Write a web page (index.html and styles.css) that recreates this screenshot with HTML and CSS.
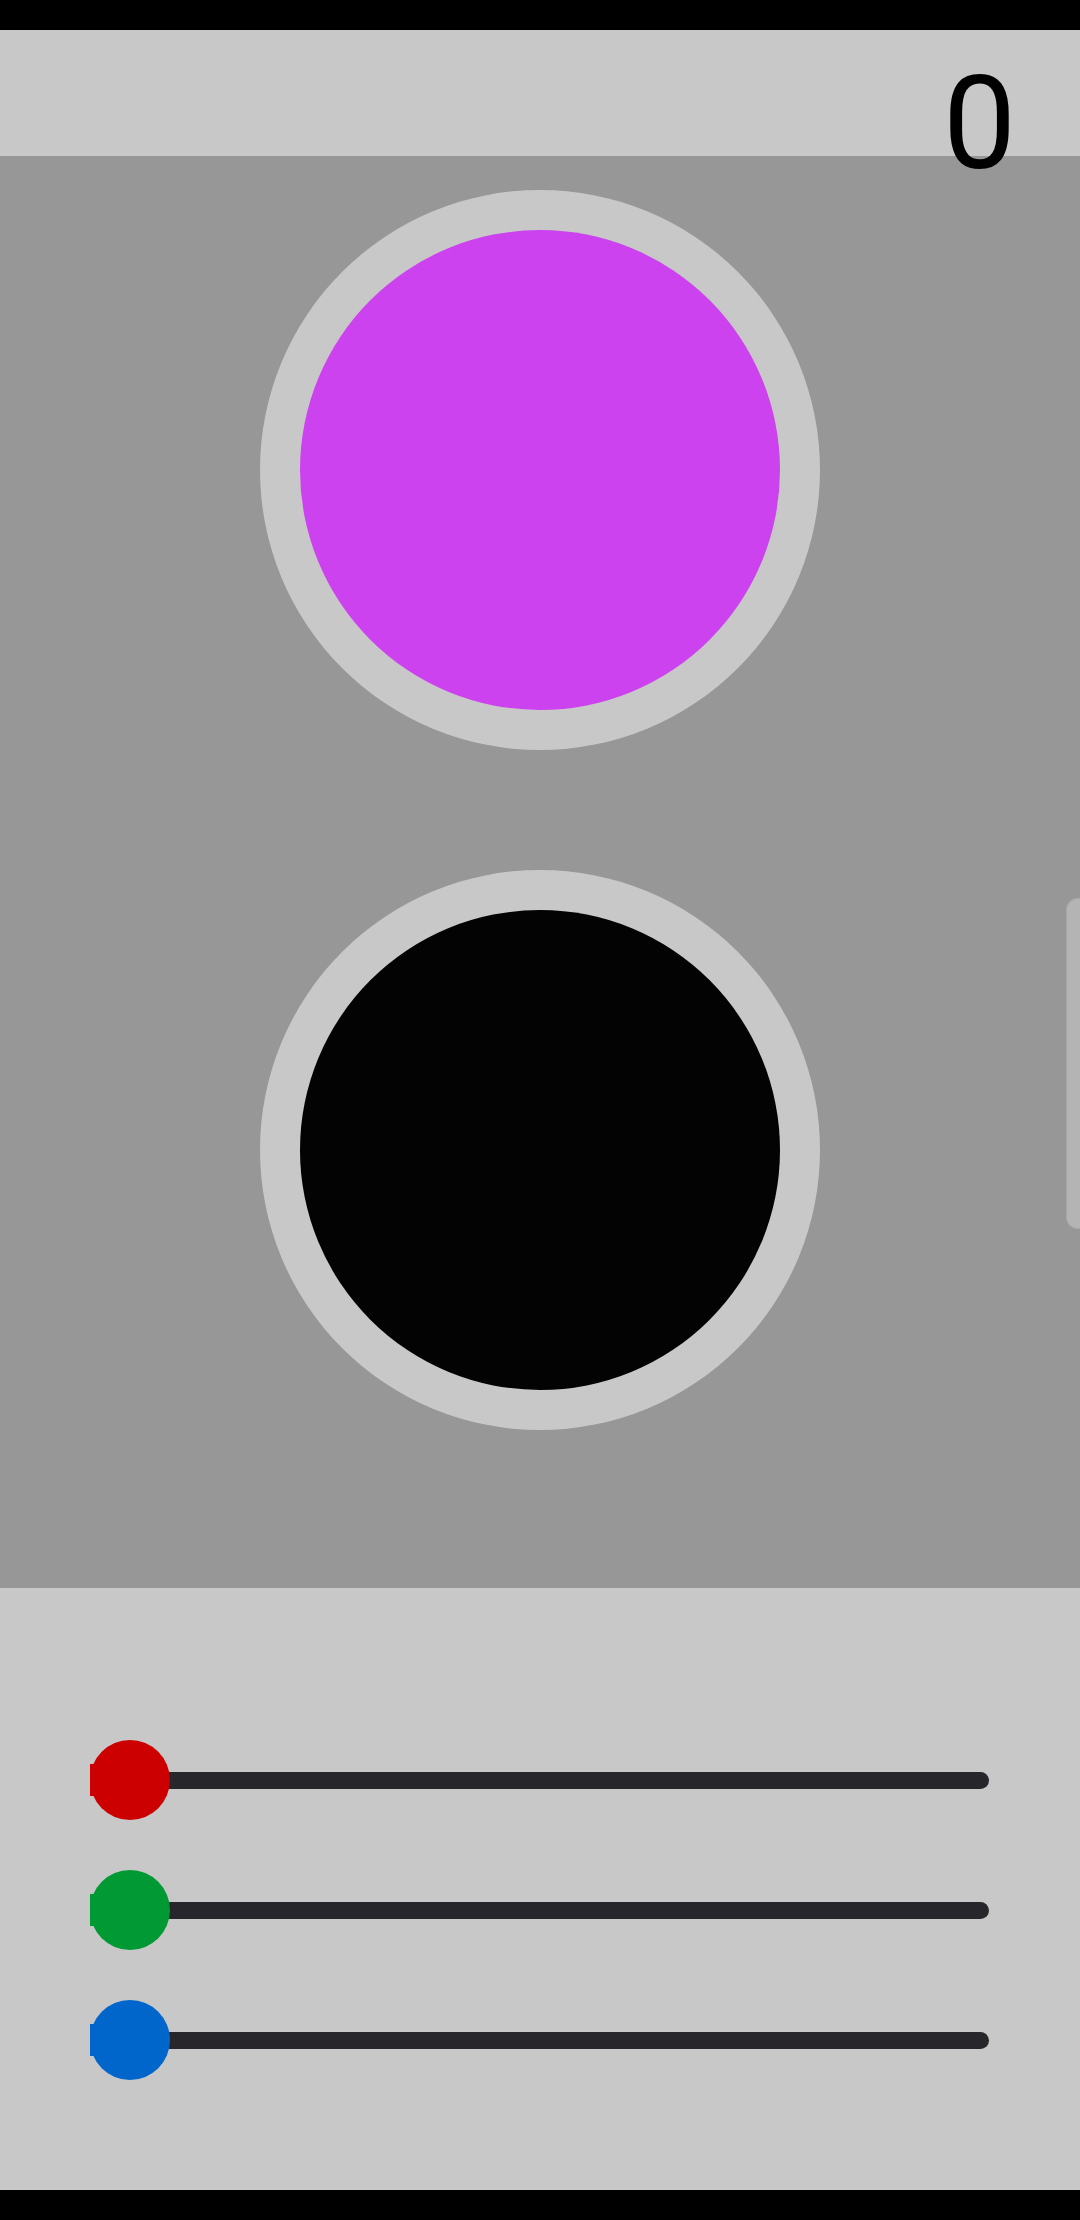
FILE: index.html
```html
<!DOCTYPE html>
<html>
<head>
<meta charset="utf-8">
<link rel="stylesheet" href="styles.css">
</head>
<body>
<div class="statusbar"></div>
<header class="header"><span class="score">0</span></header>
<main class="stage">
  <div class="ring"><div class="dot dot-magenta"></div></div>
  <div class="ring"><div class="dot dot-black"></div></div>
  <div class="scrollbar"></div>
</main>
<section class="controls">
  <div class="slider slider-red"><div class="track"></div><div class="fill"></div><div class="thumb"></div></div>
  <div class="slider slider-green"><div class="track"></div><div class="fill"></div><div class="thumb"></div></div>
  <div class="slider slider-blue"><div class="track"></div><div class="fill"></div><div class="thumb"></div></div>
</section>
<div class="navbar"></div>
</body>
</html>
```
FILE: styles.css
```css
html, body {
  margin: 0;
  padding: 0;
  background: #000;
  width: 1080px;
  height: 2220px;
  overflow: hidden;
  font-family: Roboto, "Noto Sans", sans-serif;
}
.statusbar {
  height: 30px;
  background: #000;
}
.header {
  position: relative;
  z-index: 2;
  height: 126px;
  background: #c8c8c8;
  box-sizing: border-box;
  padding: 18px 64px 0 0;
  text-align: right;
}
.score {
  font-size: 130px;
  line-height: 152px;
  color: #000;
  display: inline-block;
  height: 152px;
}
.stage {
  position: relative;
  height: 1432px;
  background: #979797;
  box-sizing: border-box;
  padding-top: 34px;
  display: flex;
  flex-direction: column;
  align-items: center;
  gap: 120px;
}
.ring {
  width: 560px;
  height: 560px;
  border-radius: 50%;
  background: #c8c8c8;
  display: flex;
  align-items: center;
  justify-content: center;
}
.dot {
  width: 480px;
  height: 480px;
  border-radius: 50%;
}
.dot-magenta { background: #cc42ee; }
.dot-black { background: #030303; }
.scrollbar {
  position: absolute;
  right: 0;
  top: 742px;
  width: 13px;
  height: 329px;
  background: #b4b4b4;
  border: 1px solid #a8a8a8;
  border-right: none;
  border-radius: 12px 0 0 12px;
}
.controls {
  height: 602px;
  background: #c8c8c8;
  box-sizing: border-box;
  padding: 152px 0 0 90px;
  display: flex;
  flex-direction: column;
  gap: 50px;
}
.slider {
  position: relative;
  width: 899px;
  height: 80px;
  display: flex;
  align-items: center;
}
.track {
  width: 100%;
  height: 17px;
  background: #27272b;
  border-radius: 0 9px 9px 0;
}
.fill {
  position: absolute;
  left: 0;
  top: 24px;
  width: 5px;
  height: 32px;
}
.thumb {
  position: absolute;
  left: 0;
  top: 0;
  width: 80px;
  height: 80px;
  border-radius: 50%;
}
.slider-red .thumb, .slider-red .fill { background: #cc0000; }
.slider-green .thumb, .slider-green .fill { background: #009933; }
.slider-blue .thumb, .slider-blue .fill { background: #0066cc; }
.navbar {
  height: 30px;
  background: #000;
}
```
